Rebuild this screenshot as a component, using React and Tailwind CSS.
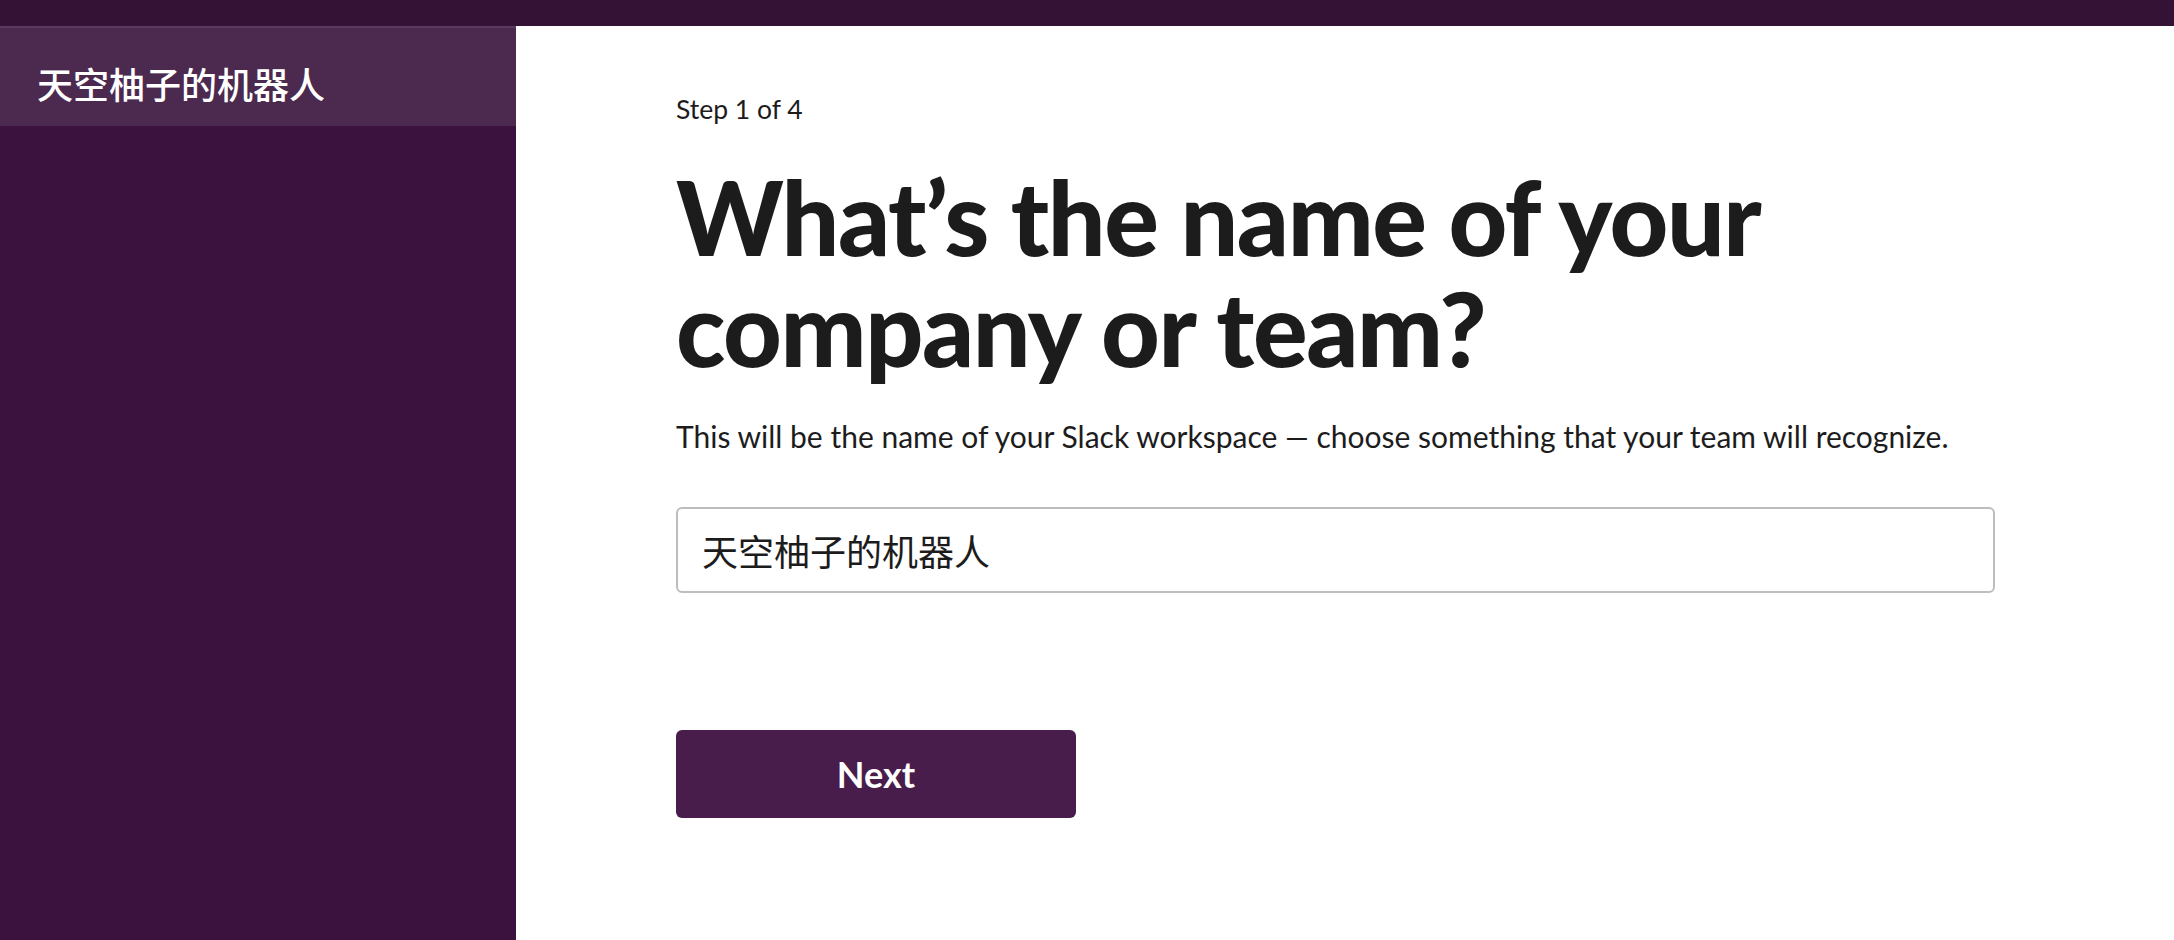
export default function App() {
  const lato = { fontFamily: '"Lato", "Noto Sans CJK SC", sans-serif' };
  return (
    <div className="flex flex-col h-[940px] w-full overflow-hidden" style={lato}>
      <div className="h-[26px] shrink-0 bg-[#341235]" />
      <div className="flex flex-1 min-h-0">
        <aside className="w-[516px] shrink-0 bg-[#3b123d] flex flex-col">
          <div className="h-[100px] border-t-2 border-[#5a3a5e] bg-[#4c2a50] flex items-center pl-[37px] pt-[12px]">
            <span
              className="text-white text-[36px] leading-[40px] font-medium"
              style={{ fontFamily: '"Noto Sans CJK SC", sans-serif' }}
            >
              天空柚子的机器人
            </span>
          </div>
        </aside>
        <main className="flex-1 bg-white pl-[160px] pt-[67px] text-[#1d1c1d]">
          <div className="text-[26.5px] leading-[32px]">Step 1 of 4</div>
          <h1 className="mt-[36px] text-[102px] leading-[111px] font-black tracking-[-1.4px]">
            What’s the name of your
            <br />
            company or team?
          </h1>
          <p className="mt-[33px] text-[30px] leading-[40px]">
            This will be the name of your Slack workspace — choose something that your team will recognize.
          </p>
          <div className="mt-[51px] w-[1319px] h-[86px] border-2 border-[#bdbdbd] rounded-md flex items-center pl-[24px]">
            <span
              className="text-[36px] leading-[40px] text-[#1d1c1d]"
              style={{ fontFamily: '"Noto Sans CJK SC", sans-serif' }}
            >
              天空柚子的机器人
            </span>
          </div>
          <button className="mt-[137px] w-[400px] h-[88px] rounded-md bg-[#481c4b] text-white text-[36px] font-bold flex items-center justify-center">
            Next
          </button>
        </main>
      </div>
    </div>
  );
}
